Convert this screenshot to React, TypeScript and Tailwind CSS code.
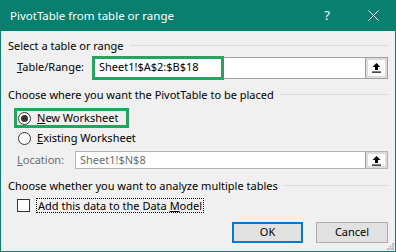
import React from "react";

const font = { fontFamily: '"Noto Sans", "Open Sans", sans-serif' };

function Section({ title }: { title: string }) {
    return (
        <div className="flex items-center h-[14px] pr-[7px]">
            <span className="whitespace-nowrap leading-none">{title}</span>
            <div className="flex-1 h-px bg-[#dadada] ml-[6px]" />
        </div>
    );
}

function PickButton() {
    return (
        <div className="w-[22px] h-full border-l border-[#a0a0a0] bg-[#dcdcdc] p-[2px]">
            <div className="w-full h-full bg-white flex items-center justify-center">
                <svg width="11" height="11" viewBox="0 0 11 11">
                    <path d="M5.5 1 L9.5 5 L7 5 L7 8 L4 8 L4 5 L1.5 5 Z" fill="#000" />
                    <rect x="1" y="9.5" width="9" height="1.2" fill="#000" />
                </svg>
            </div>
        </div>
    );
}

function Radio({ checked }: { checked?: boolean }) {
    return (
        <div className="w-[13px] h-[13px] rounded-full border border-[#333] bg-white flex items-center justify-center">
            {checked && <div className="w-[7px] h-[7px] rounded-full bg-[#333]" />}
        </div>
    );
}

export default function App() {
    return (
        <div
            className="w-[396px] h-[252px] bg-[#f0f0f0] border-x border-b border-[#087f6f] flex flex-col text-[11px] text-black"
            style={font}
        >
            {/* Title bar */}
            <div className="h-[31px] -mx-px bg-[#087f6f] text-white flex items-center pl-[10px]">
                <span className="flex-1 text-[11.5px]">PivotTable from table or range</span>
                <span className="w-[46px] text-center text-[13px]">?</span>
                <div className="w-[46px] flex justify-center">
                    <svg width="11" height="11" viewBox="0 0 11 11">
                        <path d="M0.5 0.5 L10.5 10.5 M10.5 0.5 L0.5 10.5" stroke="#fff" strokeWidth="1" />
                    </svg>
                </div>
            </div>

            <div className="flex flex-col pl-[7px]">
                <div className="mt-[7px]">
                    <Section title="Select a table or range" />
                </div>

                {/* Table/Range row */}
                <div className="flex items-center h-[25px] mt-[3px] pr-[7px]">
                    <span className="w-[85px] pl-[9px]">
                        <u>T</u>able/Range:
                    </span>
                    <div className="flex-1 h-[22px] border border-[#a0a0a0] bg-white flex">
                        <div className="flex-1 relative flex items-center pl-[5px]">
                            <div className="absolute -left-[2px] -top-[2px] w-[132px] h-[24px] border-[3px] border-[#27a35f]" />
                            Sheet1!$A$2:$B$18
                        </div>
                        <PickButton />
                    </div>
                </div>

                <div className="mt-[7px]">
                    <Section title="Choose where you want the PivotTable to be placed" />
                </div>

                {/* New Worksheet */}
                <div className="mt-[7px] ml-[6px] w-[115px] h-[20px] border-[3px] border-[#27a35f] flex items-center pl-[1px]">
                    <Radio checked />
                    <span className="ml-[6px]">
                        <u>N</u>ew Worksheet
                    </span>
                </div>

                {/* Existing Worksheet */}
                <div className="mt-[2px] ml-[10px] h-[16px] flex items-center">
                    <Radio />
                    <span className="ml-[6px]">
                        <u>E</u>xisting Worksheet
                    </span>
                </div>

                {/* Location */}
                <div className="flex items-center h-[18px] mt-[5px] pr-[7px] text-[#6d6d6d]">
                    <span className="w-[67px] pl-[9px]">
                        <u>L</u>ocation:
                    </span>
                    <div className="flex-1 h-[18px] border border-[#b4b4b4] bg-white flex">
                        <div className="flex-1 flex items-center pl-[4px]">Sheet1!$N$8</div>
                        <PickButton />
                    </div>
                </div>

                <div className="mt-[9px]">
                    <Section title="Choose whether you want to analyze multiple tables" />
                </div>

                {/* Checkbox */}
                <div className="mt-[6px] ml-[9px] h-[15px] flex items-center">
                    <div className="w-[13px] h-[13px] border border-[#333] bg-white" />
                    <span className="ml-[6px] h-[15px] inline-block px-px border border-dotted border-black leading-[13px]">
                        Add this data to the Data <u>M</u>odel
                    </span>
                </div>

                {/* Buttons */}
                <div className="flex justify-end gap-[13px] mt-[9px] pr-[7px]">
                    <button className="w-[71px] h-[21px] bg-[#e1e1e1] border-2 border-[#0078d7] flex items-center justify-center">
                        OK
                    </button>
                    <button className="w-[72px] h-[21px] bg-[#e1e1e1] border border-[#adadad] flex items-center justify-center">
                        Cancel
                    </button>
                </div>
            </div>

            <div className="flex-1 flex justify-end items-end pr-[1px] pb-[1px]">
                <svg width="7" height="7" viewBox="0 0 7 7">
                    <rect x="5" y="0" width="2" height="2" fill="#bbb" />
                    <rect x="2.5" y="2.5" width="2" height="2" fill="#bbb" />
                    <rect x="5" y="2.5" width="2" height="2" fill="#bbb" />
                    <rect x="0" y="5" width="2" height="2" fill="#bbb" />
                    <rect x="2.5" y="5" width="2" height="2" fill="#bbb" />
                    <rect x="5" y="5" width="2" height="2" fill="#bbb" />
                </svg>
            </div>
        </div>
    );
}
